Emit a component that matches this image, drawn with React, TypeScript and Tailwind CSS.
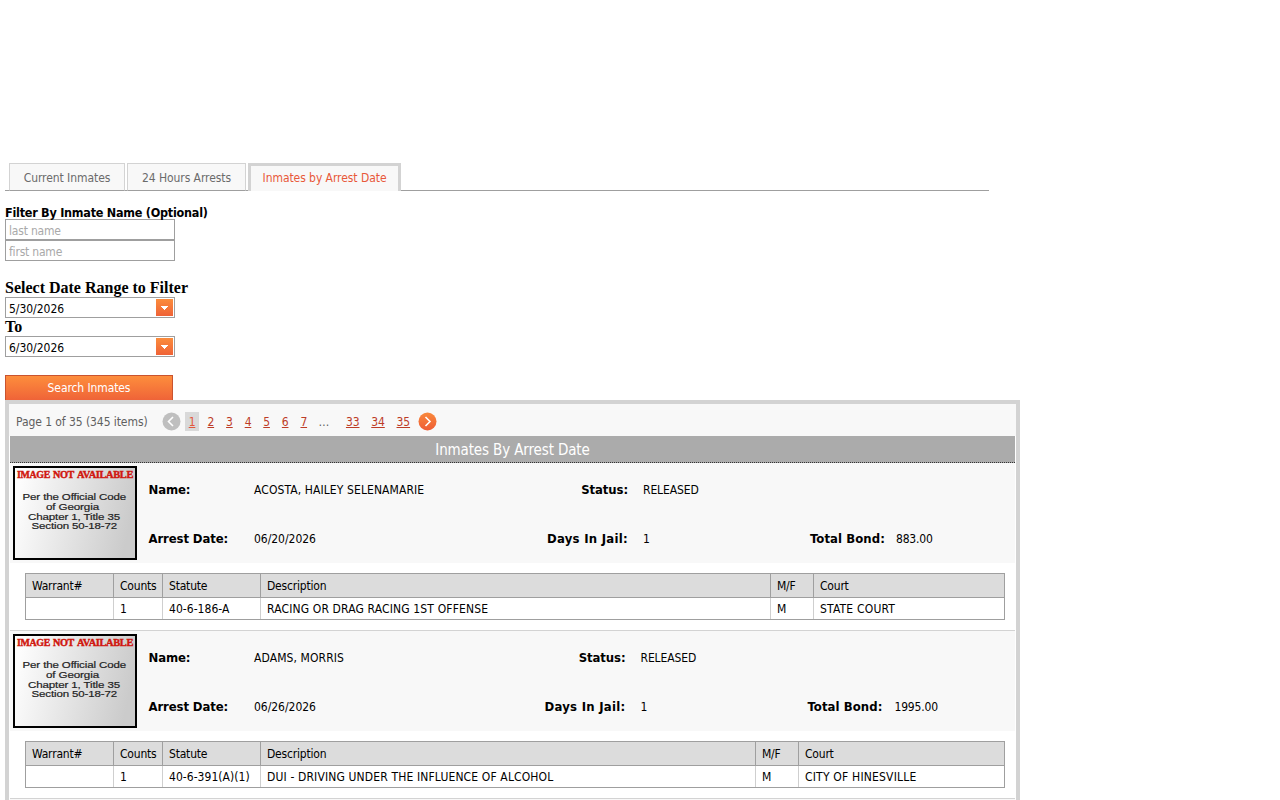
import React from "react";

type Charge = { counts: string; statute: string; description: string; mf: string; court: string };
type Inmate = {
  name: string;
  status: string;
  arrestDate: string;
  days: string;
  bond: string;
  labelCol: string;
  daysCol: string;
  bondCol: string;
  descriptionCol: string;
  charge: Charge;
};

const inmates: Inmate[] = [
  {
    name: "ACOSTA, HAILEY SELENAMARIE",
    status: "RELEASED",
    arrestDate: "06/20/2026",
    days: "1",
    bond: "883.00",
    labelCol: "w-[374px]",
    daysCol: "w-[257px]",
    bondCol: "pl-[11px]",
    descriptionCol: "w-[510px]",
    charge: { counts: "1", statute: "40-6-186-A", description: "RACING OR DRAG RACING 1ST OFFENSE", mf: "M", court: "STATE COURT" },
  },
  {
    name: "ADAMS, MORRIS",
    status: "RELEASED",
    arrestDate: "06/26/2026",
    days: "1",
    bond: "1995.00",
    labelCol: "w-[371.5px]",
    daysCol: "w-[257px]",
    bondCol: "pl-[12px]",
    descriptionCol: "w-[495px]",
    charge: { counts: "1", statute: "40-6-391(A)(1)", description: "DUI - DRIVING UNDER THE INFLUENCE OF ALCOHOL", mf: "M", court: "CITY OF HINESVILLE" },
  },
];

function Tabs() {
  return (
    <div className="flex h-7 w-[984px] items-end tracking-[-0.06px] whitespace-nowrap text-[#6b6b6b]">
      <div className="h-px w-1 bg-[#9f9f9f]" />
      <div className="flex h-7 w-[116px] justify-center border border-[#d3d3d3] border-b-[#9f9f9f] bg-[#f8f8f8] pt-[5px]">
        Current Inmates
      </div>
      <div className="h-px w-[2px] bg-[#9f9f9f]" />
      <div className="flex h-7 w-[119px] justify-center border border-[#d3d3d3] border-b-[#9f9f9f] bg-[#f8f8f8] pt-[5px]">
        24 Hours Arrests
      </div>
      <div className="h-px w-[2px] bg-[#9f9f9f]" />
      <div className="flex h-7 w-[153px] justify-center border-x-[3px] border-t-[3px] border-[#d3d3d3] bg-[#f8f8f8] pt-[3px] text-[#e8583a]">
        Inmates by Arrest Date
      </div>
      <div className="h-px flex-1 bg-[#9f9f9f]" />
    </div>
  );
}

function TextBox({ label }: { label: string }) {
  return (
    <input
      placeholder={label}
      className="block h-[21px] w-[170px] border border-[#9f9f9f] bg-white px-[3px] pt-[2px] tracking-[-0.2px] outline-none placeholder:text-[#a9a9a9]"
    />
  );
}

function DateBox({ value }: { value: string }) {
  return (
    <div className="flex h-[21px] w-[170px] items-start justify-between border border-[#9f9f9f] bg-white pr-px pl-[3px]">
      <span className="pt-[2px] tracking-[-0.03px]">{value}</span>
      <button className="mt-px flex h-[17px] w-[17px] items-center justify-center bg-linear-to-b from-[#fb8c3c] to-[#ef6237]">
        <svg width="7" height="4" viewBox="0 0 7 4" shapeRendering="crispEdges">
          <path d="M0 0h7L3.5 4z" fill="#fff" />
        </svg>
      </button>
    </div>
  );
}

function Arrow({ next = false }: { next?: boolean }) {
  return (
    <svg width="19" height="19" viewBox="0 0 19 19" fill="none" className="shrink-0">
      <defs>
        <linearGradient id="pagerOrange" x1="0" y1="0" x2="0" y2="1">
          <stop offset="0" stopColor="#f9893c" />
          <stop offset="1" stopColor="#ee5c35" />
        </linearGradient>
      </defs>
      <circle cx="9.5" cy="9.5" r="9" fill={next ? "url(#pagerOrange)" : "#bfbfbf"} />
      <path d={next ? "M7.5 5l4.5 4.5L7.5 14" : "M11 5L6.5 9.5 11 14"} stroke="#fff" strokeWidth="1.6" />
    </svg>
  );
}

function Pager() {
  const link = "text-[#bd3c27] underline underline-offset-1 text-center";
  return (
    <div className="flex h-8 items-center bg-[#f8f8f8] pt-[3px] pl-[7px] text-[#5f5f5f]">
      <span className="w-[146px] tracking-[-0.07px] whitespace-nowrap">Page 1 of 35 (345 items)</span>
      <Arrow />
      <span className="ml-1 flex h-[19px] w-[14px] items-center justify-center bg-[#d9d9d9] text-[#e2583d] underline underline-offset-1">1</span>
      <div className="ml-[2.5px] flex">
        {["2", "3", "4", "5", "6", "7"].map((n) => (
          <a key={n} className={"w-[18.6px] " + link}>{n}</a>
        ))}
      </div>
      <span className="ml-[5.5px] w-[19px]">…</span>
      <div className="ml-[2.5px] flex tracking-[-0.1px]">
        {["33", "34", "35"].map((n) => (
          <a key={n} className={"w-[25.3px] " + link}>{n}</a>
        ))}
      </div>
      <span className="ml-[2.5px]"><Arrow next /></span>
    </div>
  );
}

function PhotoPlaceholder() {
  return (
    <svg width="124" height="94" viewBox="0 0 124 94" className="shrink-0 overflow-visible">
      <defs>
        <linearGradient id="photoShade" gradientUnits="userSpaceOnUse" x1="10" y1="0" x2="124" y2="24">
          <stop offset="0" stopColor="#fdfdfd" />
          <stop offset="1" stopColor="#cbcbcb" />
        </linearGradient>
      </defs>
      <rect x="1" y="1" width="122" height="92" fill="url(#photoShade)" stroke="#000" strokeWidth="2" />
      <g fill="#d0170f" stroke="#d0170f" strokeWidth="0.45" className="font-['Liberation_Serif',serif] text-[10.5px] font-bold tracking-[-0.35px]">
        <text x="4" y="12.4" textLength="33" lengthAdjust="spacingAndGlyphs">IMAGE</text>
        <text x="40" y="12.4" textLength="21" lengthAdjust="spacingAndGlyphs">NOT</text>
        <text x="64" y="12.4" textLength="56" lengthAdjust="spacingAndGlyphs">AVAILABLE</text>
      </g>
      <g fill="#222" stroke="#222" strokeWidth="0.2" className="font-['Liberation_Sans',sans-serif] text-[9.8px] tracking-[-0.1px]">
        <text x="9.5" y="34" textLength="103.5" lengthAdjust="spacingAndGlyphs">Per the Official Code</text>
        <text x="33" y="43.8" textLength="53" lengthAdjust="spacingAndGlyphs">of Georgia</text>
        <text x="15" y="53.6" textLength="92" lengthAdjust="spacingAndGlyphs">Chapter 1, Title 35</text>
        <text x="18.5" y="63.3" textLength="85.5" lengthAdjust="spacingAndGlyphs">Section 50-18-72</text>
      </g>
    </svg>
  );
}

function ChargeTable({ inmate }: { inmate: Inmate }) {
  const c = inmate.charge;
  const head = "border-r border-[#9f9f9f] pl-[6px] text-left font-normal tracking-[-0.2px]";
  const cell = "border-r border-[#cfcfcf] pl-[6px]";
  return (
    <table className="h-[47px] w-[980px] table-fixed border-separate border-spacing-0 border border-r-0 border-[#9f9f9f] whitespace-nowrap">
      <colgroup>
        <col className="w-[88px]" />
        <col className="w-[49px]" />
        <col className="w-[98px]" />
        <col className={inmate.descriptionCol} />
        <col className="w-[43px]" />
        <col />
      </colgroup>
      <thead>
        <tr className="h-6 bg-[#dcdcdc]">
          {["Warrant#", "Counts", "Statute", "Description", "M/F", "Court"].map((h) => (
            <th key={h} className={head + " border-b"}>{h}</th>
          ))}
        </tr>
      </thead>
      <tbody>
        <tr className="h-[21px]">
          <td className={cell} />
          <td className={cell}>{c.counts}</td>
          <td className={cell + " tracking-[0.04px]"}>{c.statute}</td>
          <td className={cell + " tracking-[0.14px]"}>{c.description}</td>
          <td className={cell}>{c.mf}</td>
          <td className="border-r border-[#9f9f9f] pl-[6px] tracking-[0.2px]">{c.court}</td>
        </tr>
      </tbody>
    </table>
  );
}

function Record({ inmate }: { inmate: Inmate }) {
  const bold = "text-[13px] font-bold";
  return (
    <div className="h-[168px] border-b border-[#d3d3d3] bg-white">
      <div className="flex h-[100px] bg-[#f8f8f8] pt-[3px] pl-[3px]">
        <PhotoPlaceholder />
        <div className="flex flex-1 flex-col whitespace-nowrap leading-4">
          <div className="flex h-[49px] items-start pt-4">
            <span className={"ml-[11.5px] w-[105.5px] tracking-[-0.12px] " + bold}>Name:</span>
            <div className={"flex justify-between " + inmate.labelCol}>
              <span className="tracking-[0.1px]">{inmate.name}</span>
              <span className={bold + " tracking-[-0.1px]"}>Status:</span>
            </div>
            <span className="pl-[15px] tracking-[-0.1px]">{inmate.status}</span>
          </div>
          <div className="flex items-start pt-4">
            <span className={"ml-[11.5px] w-[105.5px] tracking-[-0.12px] " + bold}>Arrest Date:</span>
            <div className={"flex justify-between " + inmate.labelCol}>
              <span className="tracking-[-0.03px]">{inmate.arrestDate}</span>
              <span className={bold + " tracking-[0.27px]"}>Days In Jail:</span>
            </div>
            <div className={"flex justify-between pl-[15px] " + inmate.daysCol}>
              <span>{inmate.days}</span>
              <span className={bold + " tracking-[0.08px]"}>Total Bond:</span>
            </div>
            <span className={inmate.bondCol + " tracking-[-0.18px]"}>{inmate.bond}</span>
          </div>
        </div>
      </div>
      <div className="pt-[10px] pl-[15px]">
        <ChargeTable inmate={inmate} />
      </div>
    </div>
  );
}

export default function App() {
  return (
    <div className="h-[800px] overflow-hidden bg-white pt-[163px] pl-[5px] font-['DejaVu_Sans_Condensed','DejaVu_Sans',sans-serif] text-[12px] leading-[18px] tracking-[-0.25px] text-black">
      <Tabs />
      <div className="mt-[14px] h-[14px] text-[12.5px] leading-[15px] font-bold">Filter By Inmate Name (Optional)</div>
      <TextBox label="last name" />
      <TextBox label="first name" />
      <div className="mt-[18px] h-[18px] font-['Liberation_Serif',serif] text-[16px] font-bold tracking-normal">Select Date Range to Filter</div>
      <DateBox value="5/30/2026" />
      <div className="h-[18px] font-['Liberation_Serif',serif] text-[16px] font-bold tracking-normal">To</div>
      <DateBox value="6/30/2026" />
      <button className="mt-[18px] block h-[25px] w-[168px] border border-b-0 border-[#c9532f] bg-linear-to-b from-[#fd8d3c] to-[#ef6338] tracking-[-0.1px] text-white">
        Search Inmates
      </button>
      <div className="w-[1015px] border-4 border-[#d3d3d3]">
        <Pager />
        <div className="mx-px">
          <div className="h-[27px] border-b border-dotted border-[#333] bg-[#ababab] pt-[5px] text-center text-[15px] tracking-[-0.13px] text-white">
            Inmates By Arrest Date
          </div>
          {inmates.map((i) => (
            <Record key={i.name} inmate={i} />
          ))}
          <div className="h-5 bg-[#f8f8f8]" />
        </div>
      </div>
    </div>
  );
}
